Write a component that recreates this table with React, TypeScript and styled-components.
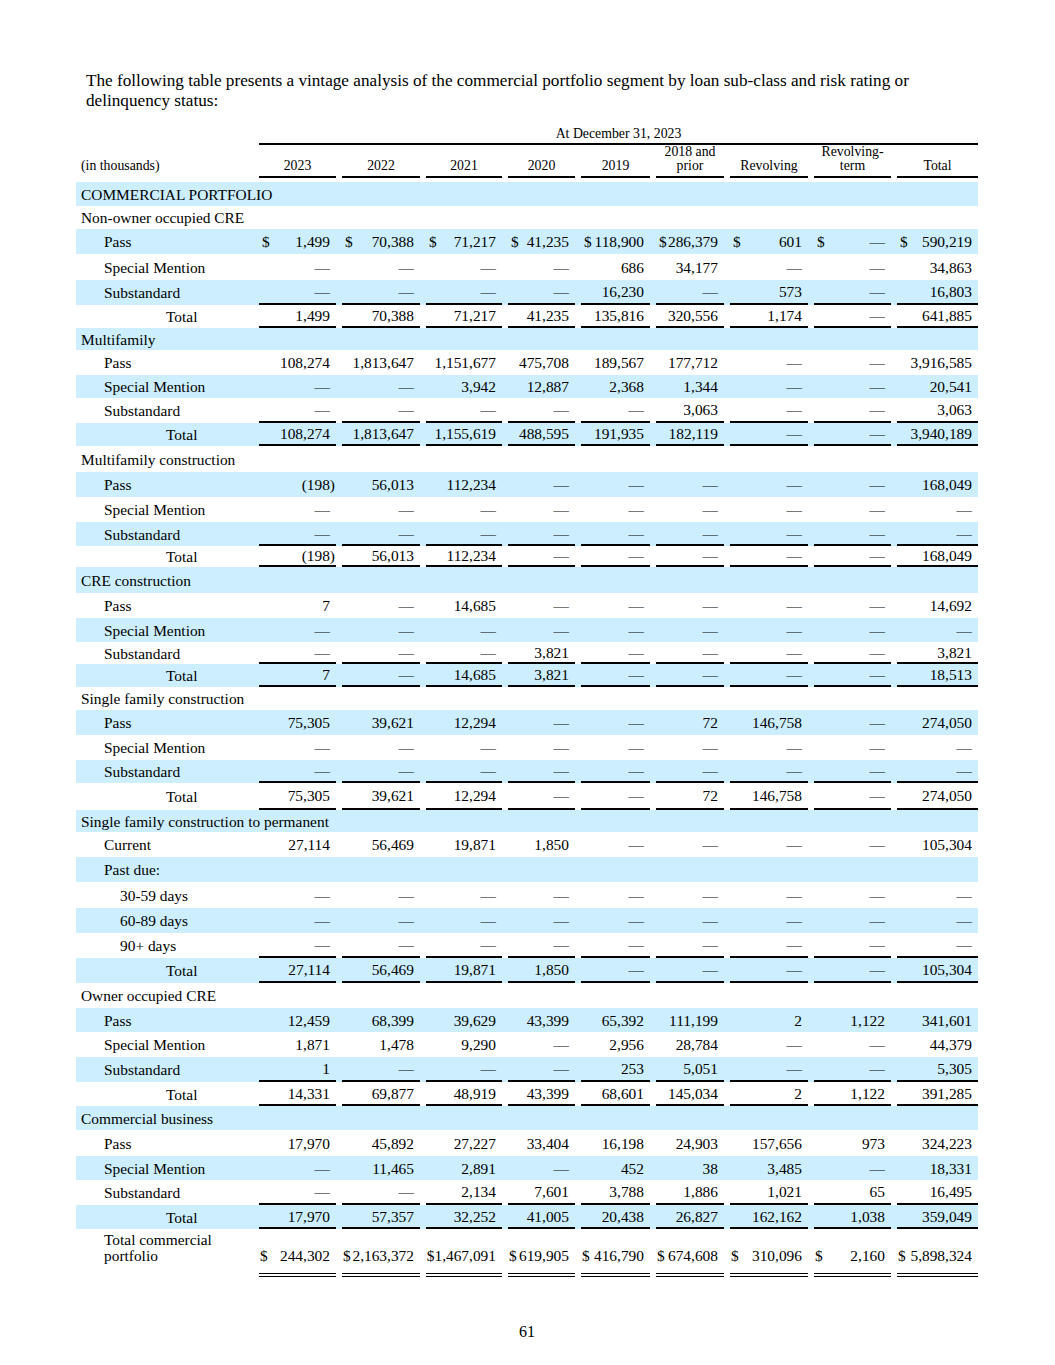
import React from 'react';
import styled, { createGlobalStyle } from 'styled-components';

const GlobalStyle = createGlobalStyle`
  html, body { margin: 0; padding: 0; background: #ffffff; }
  body {
    font-family: "Liberation Serif", "Times New Roman", serif;
    color: #000000;
  }
`;

const COLS = '177px 77px 78px 76px 67px 69px 68px 78px 77px 81px';
const BAND = '#cceeff';
const D = '—';

type Kind = 'section' | 'item' | 'sub' | 'total';
interface RowSpec {
  k: Kind;
  label: string;
  h: number;
  v?: string[];
  rule?: boolean;
  dollar?: boolean;
}

const rows: RowSpec[] = [
  { k: 'section', label: 'COMMERCIAL PORTFOLIO', h: 24 },
  { k: 'section', label: 'Non-owner occupied CRE', h: 23 },
  { k: 'item', label: 'Pass', h: 25, dollar: true, v: ['1,499', '70,388', '71,217', '41,235', '118,900', '286,379', '601', D, '590,219'] },
  { k: 'item', label: 'Special Mention', h: 26, v: [D, D, D, D, '686', '34,177', D, D, '34,863'] },
  { k: 'item', label: 'Substandard', h: 25, rule: true, v: [D, D, D, D, '16,230', D, '573', D, '16,803'] },
  { k: 'total', label: 'Total', h: 23, rule: true, v: ['1,499', '70,388', '71,217', '41,235', '135,816', '320,556', '1,174', D, '641,885'] },

  { k: 'section', label: 'Multifamily', h: 22 },
  { k: 'item', label: 'Pass', h: 25, v: ['108,274', '1,813,647', '1,151,677', '475,708', '189,567', '177,712', D, D, '3,916,585'] },
  { k: 'item', label: 'Special Mention', h: 23, v: [D, D, '3,942', '12,887', '2,368', '1,344', D, D, '20,541'] },
  { k: 'item', label: 'Substandard', h: 25, rule: true, v: [D, D, D, D, D, '3,063', D, D, '3,063'] },
  { k: 'total', label: 'Total', h: 23, rule: true, v: ['108,274', '1,813,647', '1,155,619', '488,595', '191,935', '182,119', D, D, '3,940,189'] },

  { k: 'section', label: 'Multifamily construction', h: 26 },
  { k: 'item', label: 'Pass', h: 25, v: ['(198)', '56,013', '112,234', D, D, D, D, D, '168,049'] },
  { k: 'item', label: 'Special Mention', h: 25, v: [D, D, D, D, D, D, D, D, D] },
  { k: 'item', label: 'Substandard', h: 24, rule: true, v: [D, D, D, D, D, D, D, D, D] },
  { k: 'total', label: 'Total', h: 21, rule: true, v: ['(198)', '56,013', '112,234', D, D, D, D, D, '168,049'] },

  { k: 'section', label: 'CRE construction', h: 26 },
  { k: 'item', label: 'Pass', h: 25, v: ['7', D, '14,685', D, D, D, D, D, '14,692'] },
  { k: 'item', label: 'Special Mention', h: 24, v: [D, D, D, D, D, D, D, D, D] },
  { k: 'item', label: 'Substandard', h: 22, rule: true, v: [D, D, D, '3,821', D, D, D, D, '3,821'] },
  { k: 'total', label: 'Total', h: 23, rule: true, v: ['7', D, '14,685', '3,821', D, D, D, D, '18,513'] },

  { k: 'section', label: 'Single family construction', h: 23 },
  { k: 'item', label: 'Pass', h: 25, v: ['75,305', '39,621', '12,294', D, D, '72', '146,758', D, '274,050'] },
  { k: 'item', label: 'Special Mention', h: 25, v: [D, D, D, D, D, D, D, D, D] },
  { k: 'item', label: 'Substandard', h: 23, rule: true, v: [D, D, D, D, D, D, D, D, D] },
  { k: 'total', label: 'Total', h: 27, rule: true, v: ['75,305', '39,621', '12,294', D, D, '72', '146,758', D, '274,050'] },

  { k: 'section', label: 'Single family construction to permanent', h: 22 },
  { k: 'item', label: 'Current', h: 25, v: ['27,114', '56,469', '19,871', '1,850', D, D, D, D, '105,304'] },
  { k: 'item', label: 'Past due:', h: 25 },
  { k: 'sub', label: '30-59 days', h: 26, v: [D, D, D, D, D, D, D, D, D] },
  { k: 'sub', label: '60-89 days', h: 25, v: [D, D, D, D, D, D, D, D, D] },
  { k: 'sub', label: '90+ days', h: 25, rule: true, v: [D, D, D, D, D, D, D, D, D] },
  { k: 'total', label: 'Total', h: 25, rule: true, v: ['27,114', '56,469', '19,871', '1,850', D, D, D, D, '105,304'] },

  { k: 'section', label: 'Owner occupied CRE', h: 25 },
  { k: 'item', label: 'Pass', h: 24, v: ['12,459', '68,399', '39,629', '43,399', '65,392', '111,199', '2', '1,122', '341,601'] },
  { k: 'item', label: 'Special Mention', h: 25, v: ['1,871', '1,478', '9,290', D, '2,956', '28,784', D, D, '44,379'] },
  { k: 'item', label: 'Substandard', h: 25, rule: true, v: ['1', D, D, D, '253', '5,051', D, D, '5,305'] },
  { k: 'total', label: 'Total', h: 24, rule: true, v: ['14,331', '69,877', '48,919', '43,399', '68,601', '145,034', '2', '1,122', '391,285'] },

  { k: 'section', label: 'Commercial business', h: 24 },
  { k: 'item', label: 'Pass', h: 26, v: ['17,970', '45,892', '27,227', '33,404', '16,198', '24,903', '157,656', '973', '324,223'] },
  { k: 'item', label: 'Special Mention', h: 24, v: [D, '11,465', '2,891', D, '452', '38', '3,485', D, '18,331'] },
  { k: 'item', label: 'Substandard', h: 25, rule: true, v: [D, D, '2,134', '7,601', '3,788', '1,886', '1,021', '65', '16,495'] },
  { k: 'total', label: 'Total', h: 24, rule: true, v: ['17,970', '57,357', '32,252', '41,005', '20,438', '26,827', '162,162', '1,038', '359,049'] },
];

const grand = ['244,302', '2,163,372', '1,467,091', '619,905', '416,790', '674,608', '310,096', '2,160', '5,898,324'];

const headers: string[][] = [
  ['2023'],
  ['2022'],
  ['2021'],
  ['2020'],
  ['2019'],
  ['2018 and', 'prior'],
  ['Revolving'],
  ['Revolving-', 'term'],
  ['Total'],
];

const indents: Record<Kind, number> = { section: 5, item: 28, sub: 44, total: 90 };

const Page = styled.div`
  width: 1055px;
  min-height: 1365px;
  box-sizing: border-box;
  padding: 71px 0 0 76px;
`;

const Intro = styled.p`
  margin: 0 0 16px 10px;
  width: 892px;
  font-size: 17.2px;
  line-height: 20px;
`;

const Table = styled.div`
  width: 902px;
  display: flex;
  flex-direction: column;
`;

const PeriodRow = styled.div`
  display: grid;
  grid-template-columns: ${COLS};
  column-gap: 6px;
  font-size: 13.8px;
  line-height: 14px;
`;

const PeriodCell = styled.div`
  grid-column: 2 / -1;
  text-align: center;
  padding-bottom: 2px;
  border-bottom: 2px solid #000;
`;

const HeadRow = styled.div`
  display: grid;
  grid-template-columns: ${COLS};
  column-gap: 6px;
  align-items: end;
  font-size: 13.8px;
  line-height: 14px;
  margin-bottom: 4px;
`;

const HeadLabel = styled.div`
  padding: 0 0 5px 5px;
  white-space: nowrap;
`;

const HeadCell = styled.div`
  text-align: center;
  padding-bottom: 3px;
  border-bottom: 2px solid #000;
`;

const BodyRow = styled.div<{ $h: number; $band: boolean }>`
  display: grid;
  grid-template-columns: ${COLS};
  column-gap: 6px;
  height: ${(p) => p.$h}px;
  background: ${(p) => (p.$band ? BAND : 'transparent')};
  font-size: 15.4px;
  line-height: 17px;
`;

const Label = styled.div<{ $indent: number }>`
  display: flex;
  align-items: center;
  padding-left: ${(p) => p.$indent}px;
  white-space: nowrap;
`;

const Cell = styled.div<{ $rule?: boolean }>`
  display: flex;
  align-items: center;
  justify-content: flex-end;
  box-sizing: border-box;
  min-width: 0;
  padding: 0 6px 0 3px;
  white-space: nowrap;
  border-bottom: ${(p) => (p.$rule ? '2px solid #000' : 'none')};
`;

const Dollar = styled.span`
  margin-right: auto;
`;

const Num = styled.span<{ $hang?: boolean }>`
  margin-right: ${(p) => (p.$hang ? '-5px' : '0')};
`;

const GrandRow = styled.div`
  display: grid;
  grid-template-columns: ${COLS};
  column-gap: 6px;
  height: 48px;
  font-size: 15.4px;
  line-height: 16px;
`;

const GrandLabel = styled.div`
  align-self: end;
  padding: 0 0 13px 28px;
`;

const GrandCell = styled(Cell)`
  align-items: flex-end;
  padding-bottom: 9px;
  padding-left: 1px;
  border-bottom: 4px double #000;
`;

const PageNum = styled.div`
  width: 902px;
  margin-top: 45px;
  text-align: center;
  font-size: 16px;
  line-height: 20px;
`;

const Value: React.FC<{ text: string; dollar?: boolean }> = ({ text, dollar }) => (
  <>
    {dollar && <Dollar>$</Dollar>}
    <Num $hang={text.endsWith(')')}>{text}</Num>
  </>
);

export default function App() {
  return (
    <>
      <GlobalStyle />
      <Page>
        <Intro>
          The following table presents a vintage analysis of the commercial portfolio segment by loan sub-class and risk rating or delinquency status:
        </Intro>
        <Table>
          <PeriodRow>
            <PeriodCell>At December 31, 2023</PeriodCell>
          </PeriodRow>
          <HeadRow>
            <HeadLabel>(in thousands)</HeadLabel>
            {headers.map((lines, i) => (
              <HeadCell key={i}>
                {lines.map((l, j) => (
                  <div key={j}>{l}</div>
                ))}
              </HeadCell>
            ))}
          </HeadRow>
          {rows.map((r, i) => (
            <BodyRow key={i} $h={r.h} $band={i % 2 === 0}>
              <Label $indent={indents[r.k]}>{r.label}</Label>
              {r.v &&
                r.v.map((val, j) => (
                  <Cell key={j} $rule={r.rule}>
                    <Value text={val} dollar={r.dollar} />
                  </Cell>
                ))}
            </BodyRow>
          ))}
          <GrandRow>
            <GrandLabel>
              Total commercial
              <br />
              portfolio
            </GrandLabel>
            {grand.map((val, j) => (
              <GrandCell key={j}>
                <Value text={val} dollar />
              </GrandCell>
            ))}
          </GrandRow>
        </Table>
        <PageNum>61</PageNum>
      </Page>
    </>
  );
}
